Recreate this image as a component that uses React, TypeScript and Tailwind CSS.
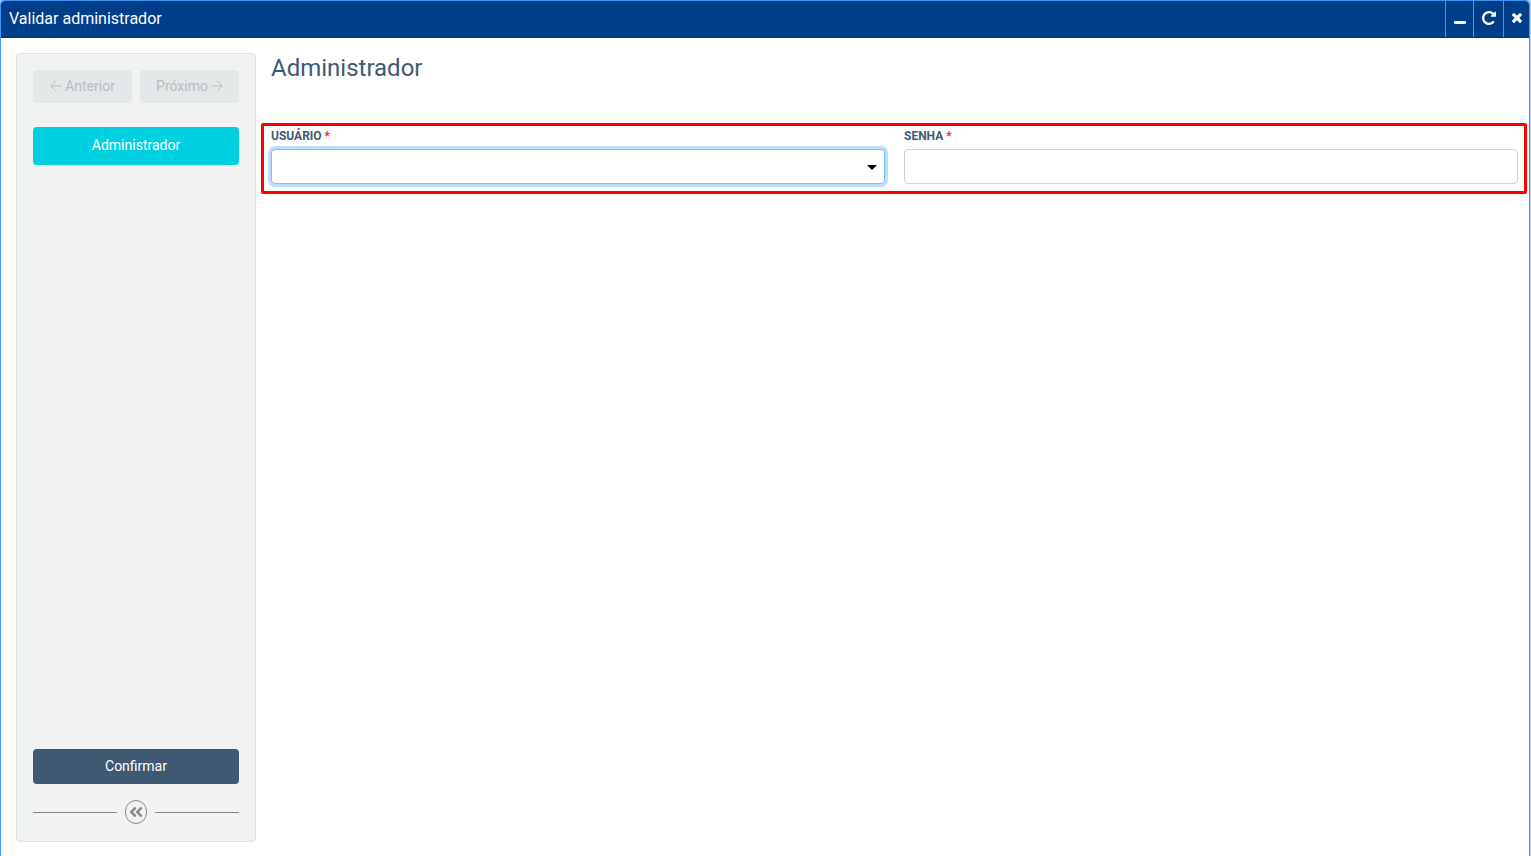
import React from 'react';
import { FaAngleDoubleLeft } from 'react-icons/fa';

const ArrowIcon: React.FC<{ direction: 'left' | 'right' }> = ({ direction }) => (
    <svg viewBox="0 0 12 12" className="size-3 shrink-0" fill="none" stroke="currentColor" aria-hidden="true">
        <path d={direction === 'left' ? 'M11.5 6H1M6 .8L.8 6L6 11.2' : 'M.5 6H11M6 .8L11.2 6L6 11.2'} />
    </svg>
);

const TitleBar: React.FC = () => (
    <header className="flex h-[37px] items-stretch rounded-t-sm border-b border-[#003375] bg-[#003e8a] text-white">
        <h1 className="flex-1 pl-2 pt-1.5 text-base leading-6">Validar administrador</h1>
        <button type="button" aria-label="Minimizar" className="flex w-7 items-center justify-center border-l border-[#4096f5] pb-0.5">
            <svg viewBox="0 0 12 12" className="size-3" fill="currentColor" aria-hidden="true">
                <rect x="0" y="9" width="12" height="3" rx="1" />
            </svg>
        </button>
        <button type="button" aria-label="Recarregar" className="flex w-[30px] items-center justify-center border-l border-[#4096f5] pb-0.5">
            <svg viewBox="0 0 1536 1536" className="size-3.5" fill="currentColor" aria-hidden="true">
                <path d="M1536 128v448q0 26-19 45t-45 19h-448q-42 0-59-40-17-39 14-69l138-138q-148-137-349-137-104 0-198.500 40.500t-163.500 109.500-109.500 163.500-40.500 198.500 40.500 198.500 109.500 163.500 163.500 109.500 198.500 40.500q119 0 225-52t179-147q7-10 23-12 15 0 25 9l137 138q9 8 9.500 20.500t-7.500 22.500q-109 132-264 204.500t-327 72.500q-156 0-298-61t-245-164-164-245-61-298 61-298 164-245 245-164 298-61q147 0 284.500 55.500t244.500 156.500l130-129q29-31 70-14 39 17 39 59z" />
            </svg>
        </button>
        <button type="button" aria-label="Fechar" className="flex w-[26px] items-center justify-center border-l border-[#4096f5] pb-0.5">
            <svg viewBox="110 258 1188 1188" className="size-2.5" fill="currentColor" aria-hidden="true">
                <path d="M1298 1214q0 40-28 68l-136 136q-28 28-68 28t-68-28l-294-294-294 294q-28 28-68 28t-68-28l-136-136q-28-28-28-68t28-68l294-294-294-294q-28-28-28-68t28-68l136-136q28-28 68-28t68 28l294 294 294-294q28-28 68-28t68 28l136 136q28 28 28 68t-28 68l-294 294 294 294q28 28 28 68z" />
            </svg>
        </button>
    </header>
);

const Sidebar: React.FC = () => (
    <aside className="flex w-60 shrink-0 flex-col rounded border border-[#dce1e5] bg-[#f1f3f3] px-4 pb-[17px] pt-4 text-sm">
        <div className="grid grid-cols-2 gap-2">
            <button type="button" disabled className="flex h-[33px] items-center justify-center gap-[3px] rounded bg-[#e4e8e9] pb-px text-[#b3c0c0]">
                <ArrowIcon direction="left" />
                Anterior
            </button>
            <button type="button" disabled className="flex h-[33px] items-center justify-center gap-[3px] rounded bg-[#e4e8e9] pb-px text-[#b3c0c0]">
                Próximo
                <ArrowIcon direction="right" />
            </button>
        </div>
        <button type="button" className="mt-6 h-[38px] rounded bg-[#00d1e0] pb-0.5 text-white">
            Administrador
        </button>
        <button type="button" className="mt-auto h-[35px] rounded bg-[#3f5973] pb-0.5 text-white">
            Confirmar
        </button>
        <div className="mt-4 flex items-center gap-2 text-[#858987]">
            <span className="h-px flex-1 bg-current" />
            <button type="button" aria-label="Recolher menu" className="flex h-6 w-[22px] items-center justify-center rounded-full border border-current">
                <FaAngleDoubleLeft className="size-4" />
            </button>
            <span className="h-px flex-1 bg-current" />
        </div>
    </aside>
);

const App: React.FC = () => {
    return (
        <div className="min-h-screen bg-[#bcd3f8] pr-px font-['Roboto',sans-serif]">
            <div className="flex min-h-screen flex-col rounded-t border border-b-0 border-[#4096f5] bg-white">
                <TitleBar />
                <div className="flex flex-1 pb-3.5 pl-[15px] pr-0.5 pt-[15px]">
                    <Sidebar />
                    <main className="ml-[5px] min-w-0 flex-1">
                        <h2 className="pl-2.5 text-2xl leading-[30px] text-[#3f5973]">Administrador</h2>
                        <form className="mt-10 grid grid-cols-2 gap-[19px] rounded-xs border-3 border-[#ff0000] pb-[7px] pl-[7px] pr-1.5">
                            <div>
                                <label htmlFor="usuario" className="block h-[23px] text-xs leading-5 font-bold text-[#3f5973]">
                                    USUÁRIO <span className="text-[#f5222d]">*</span>
                                </label>
                                <div className="relative">
                                    <select id="usuario" className="block h-[35px] w-full appearance-none rounded border border-[#80bdff] bg-white px-3 text-sm ring-3 ring-[#bfdeff] outline-none">
                                        <option value=""></option>
                                    </select>
                                    <svg viewBox="0 0 10 5" className="pointer-events-none absolute right-2 top-4 h-[5px] w-2.5" aria-hidden="true">
                                        <path d="M0 0h10L5 5z" />
                                    </svg>
                                </div>
                            </div>
                            <div>
                                <label htmlFor="senha" className="block h-[23px] text-xs leading-5 font-bold text-[#3f5973]">
                                    SENHA <span className="text-[#f5222d]">*</span>
                                </label>
                                <input id="senha" type="password" className="block h-[35px] w-full rounded border border-[#ced4da] bg-white px-3 text-sm outline-none" />
                            </div>
                        </form>
                    </main>
                </div>
            </div>
        </div>
    );
};

export default App;
